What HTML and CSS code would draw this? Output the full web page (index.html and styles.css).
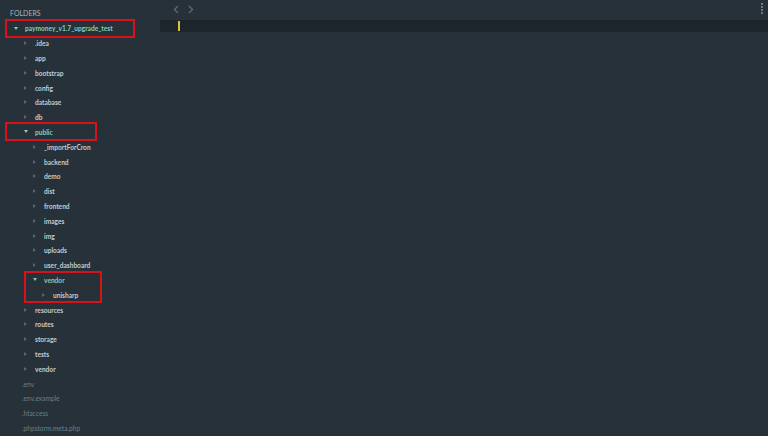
FILE: index.html
```html
<!DOCTYPE html>
<html lang="en">
<head>
    <meta charset="UTF-8">
    <meta name="viewport" content="width=device-width, initial-scale=1.0">
    <title>paymoney_v1.7_upgrade_test</title>
    <link rel="stylesheet" href="styles.css">
</head>
<body>
    <div class="window">
        <div class="sidebar">
            <div class="heading">FOLDERS</div>
            <div class="row open lv0"><span class="arrow"></span>paymoney_v1.7_upgrade_test</div>
            <div class="row lv1"><span class="arrow"></span>.idea</div>
            <div class="row lv1"><span class="arrow"></span>app</div>
            <div class="row lv1"><span class="arrow"></span>bootstrap</div>
            <div class="row lv1"><span class="arrow"></span>config</div>
            <div class="row lv1"><span class="arrow"></span>database</div>
            <div class="row lv1"><span class="arrow"></span>db</div>
            <div class="row open lv1"><span class="arrow"></span>public</div>
            <div class="row lv2"><span class="arrow"></span>_importForCron</div>
            <div class="row lv2"><span class="arrow"></span>backend</div>
            <div class="row lv2"><span class="arrow"></span>demo</div>
            <div class="row lv2"><span class="arrow"></span>dist</div>
            <div class="row lv2"><span class="arrow"></span>frontend</div>
            <div class="row lv2"><span class="arrow"></span>images</div>
            <div class="row lv2"><span class="arrow"></span>img</div>
            <div class="row lv2"><span class="arrow"></span>uploads</div>
            <div class="row lv2"><span class="arrow"></span>user_dashboard</div>
            <div class="row open lv2"><span class="arrow"></span>vendor</div>
            <div class="row lv3"><span class="arrow"></span>unisharp</div>
            <div class="row lv1"><span class="arrow"></span>resources</div>
            <div class="row lv1"><span class="arrow"></span>routes</div>
            <div class="row lv1"><span class="arrow"></span>storage</div>
            <div class="row lv1"><span class="arrow"></span>tests</div>
            <div class="row lv1"><span class="arrow"></span>vendor</div>
            <div class="row file">.env</div>
            <div class="row file">.env.example</div>
            <div class="row file">.htaccess</div>
            <div class="row file">.phpstorm.meta.php</div>

            <div class="mark mark-root"></div>
            <div class="mark mark-public"></div>
            <div class="mark mark-vendor"></div>
        </div>
        <div class="editor">
            <div class="tabbar">
                <svg class="nav" width="6" height="9" viewBox="0 0 6 9"><path d="M5 1 L1.5 4.5 L5 8" fill="none" stroke="#5f6c74" stroke-width="1.3"/></svg>
                <svg class="nav" width="6" height="9" viewBox="0 0 6 9"><path d="M1 1 L4.5 4.5 L1 8" fill="none" stroke="#5f6c74" stroke-width="1.3"/></svg>
                <span class="more"></span>
            </div>
            <div class="line"><span class="caret"></span></div>
        </div>
    </div>
</body>
</html>
```
FILE: styles.css
```css
body {
    margin: 0;
    padding: 0;
    background-color: #263139;
    font-family: Lato, "Open Sans", sans-serif;
}
.window {
    display: flex;
    height: 436px;
    overflow: hidden;
}
.sidebar {
    position: relative;
    width: 160px;
    flex-shrink: 0;
    padding-top: 6px;
}
.heading {
    height: 15px;
    line-height: 15px;
    padding-left: 10px;
    font-size: 7px;
    color: #aab4ba;
}
.row {
    display: flex;
    align-items: center;
    height: 14.8px;
    font-size: 6.6px;
    font-weight: 700;
    color: #c4cbcf;
    white-space: nowrap;
}
.arrow {
    width: 0;
    height: 0;
    margin-right: 8px;
    border-top: 2px solid transparent;
    border-bottom: 2px solid transparent;
    border-left: 3px solid #56656e;
}
.row.open {
    color: #86cbbf;
}
.row.open .arrow {
    margin-right: 7px;
    border-left: 2px solid transparent;
    border-right: 2px solid transparent;
    border-top: 3px solid #86cbbf;
    border-bottom: none;
}
.lv0 { padding-left: 14px; }
.lv1 { padding-left: 24px; }
.lv2 { padding-left: 33px; }
.lv3 { padding-left: 42px; }
.row.file {
    padding-left: 22px;
    font-weight: 400;
    color: #66808f;
}
/* highlight boxes drawn on top of the tree */
.mark {
    position: absolute;
    border: 2px solid #d8121b;
    box-sizing: border-box;
}
.mark-root {
    left: 5px;
    top: 19px;
    width: 130px;
    height: 19px;
}
.mark-public {
    left: 5px;
    top: 122px;
    width: 92px;
    height: 19px;
}
.mark-vendor {
    left: 24px;
    top: 271px;
    width: 78px;
    height: 32px;
}
.editor {
    flex: 1;
    position: relative;
}
.tabbar {
    height: 20px;
    display: flex;
    align-items: center;
    padding-left: 13px;
    gap: 9px;
}
.nav {
    margin-top: -2px;
}
.more {
    position: absolute;
    right: 5px;
    top: 3px;
    width: 2px;
    height: 12px;
    background: repeating-linear-gradient(#6e7a82 0 2px, transparent 2px 3px);
}
.line {
    height: 12px;
    background-color: #1d252c;
    padding-left: 18px;
    display: flex;
    align-items: center;
}
.caret {
    width: 1.5px;
    height: 10px;
    background-color: #d9c332;
}
```
